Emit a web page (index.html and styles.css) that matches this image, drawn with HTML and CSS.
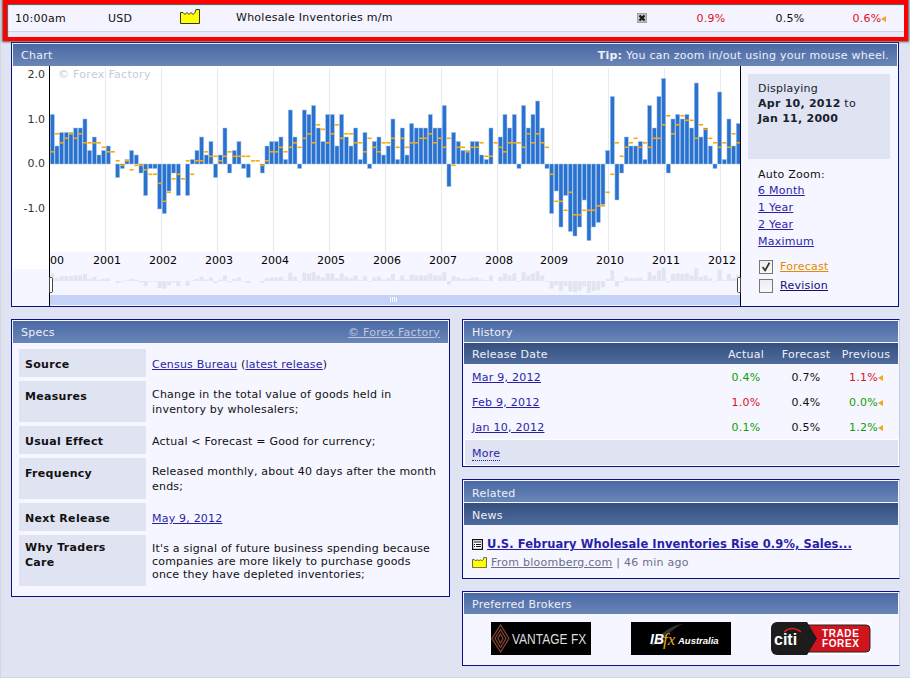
FILE: index.html
```html
<!DOCTYPE html>
<html lang="en">
<head>
<meta charset="utf-8">
<title>Wholesale Inventories m/m</title>
<link rel="stylesheet" href="styles.css">
</head>
<body>
<div class="page">
  <div class="event">
    <span class="event-time">10:00am</span>
    <span class="event-cur">USD</span>
    <span class="event-impact"><svg class="factory" viewBox="0 0 20 15"><path d="M.5 14.500V3.500H3l2 2 2-2 2 2 2-2 2 2 2-2 1-3h3.500v14z"/></svg></span>
    <span class="event-title">Wholesale Inventories m/m</span>
    <span class="event-detail"><svg class="xicon" viewBox="0 0 10 10"><rect width="10" height="10" class="xicon-bg"/><path d="M2.500 2.500l5 5M7.500 2.500l-5 5" class="xicon-x"/></svg></span>
    <span class="event-num event-actual red">0.9%</span>
    <span class="event-num event-fc">0.5%</span>
    <span class="event-num event-prev red">0.6%<i class="tri"></i></span>
  </div>
  <div class="redbox"></div>

  <section class="panel chart-panel">
    <header class="head"><span>Chart</span><span class="tip"><b>Tip:</b> You can zoom in/out using your mouse wheel.</span></header>
    <div class="chart-body">
      <svg id="chart" class="chart" viewBox="13 66 728 240" width="728" height="240"></svg>
      <aside class="side">
        <div class="display-box">Displaying<br><b>Apr 10, 2012</b> to<br><b>Jan 11, 2000</b></div>
        <div class="zoom-title">Auto Zoom:</div>
        <a class="zoom-link" href="#">6 Month</a>
        <a class="zoom-link" href="#">1 Year</a>
        <a class="zoom-link" href="#">2 Year</a>
        <a class="zoom-link" href="#">Maximum</a>
        <div class="legend first"><span class="check"><svg viewBox="0 0 14 14"><path d="M3 7l3 4 5-9" class="tick"/></svg></span><a href="#" class="orange">Forecast</a></div>
        <div class="legend"><span class="check"></span><a href="#" class="navy">Revision</a></div>
      </aside>
    </div>
  </section>

  <div class="cols">
    <section class="panel specs">
      <header class="head"><span>Specs</span><a class="head-link" href="#">© Forex Factory</a></header>
      <div class="spec-rows">
        <div class="spec single"><div class="spec-label">Source</div><div class="spec-value"><a href="#">Census Bureau</a> (<a href="#">latest release</a>)</div></div>
        <div class="spec double"><div class="spec-label">Measures</div><div class="spec-value">Change in the total value of goods held in inventory by wholesalers;</div></div>
        <div class="spec single"><div class="spec-label">Usual Effect</div><div class="spec-value">Actual &lt; Forecast = Good for currency;</div></div>
        <div class="spec double"><div class="spec-label">Frequency</div><div class="spec-value">Released monthly, about 40 days after the month ends;</div></div>
        <div class="spec single"><div class="spec-label">Next Release</div><div class="spec-value"><a href="#">May 9, 2012</a></div></div>
        <div class="spec why"><div class="spec-label">Why Traders Care</div><div class="spec-value">It's a signal of future business spending because companies are more likely to purchase goods once they have depleted inventories;</div></div>
      </div>
    </section>

    <div class="right">
      <section class="panel wide">
        <header class="head short">History</header>
        <div class="hist-grid subhead"><span>Release Date</span><span class="c">Actual</span><span class="c">Forecast</span><span class="c">Previous</span></div>
        <div class="hist-grid row"><a href="#">Mar 9, 2012</a><span class="c green">0.4%</span><span class="c">0.7%</span><span class="c red">1.1%<i class="tri"></i></span></div>
        <div class="hist-grid row"><a href="#">Feb 9, 2012</a><span class="c red">1.0%</span><span class="c">0.4%</span><span class="c green">0.0%<i class="tri"></i></span></div>
        <div class="hist-grid row"><a href="#">Jan 10, 2012</a><span class="c green">0.1%</span><span class="c">0.5%</span><span class="c green">1.2%<i class="tri"></i></span></div>
        <div class="more"><a href="#">More</a></div>
      </section>

      <section class="panel wide">
        <header class="head short related">Related</header>
        <div class="subhead news-head">News</div>
        <div class="news">
          <div class="news-title"><svg class="newsicon" viewBox="0 0 11 11"><rect x=".5" y=".5" width="10" height="10" class="ni-box"/><path d="M2 3h7M2 5.500h1M4 5.500h5M2 7.500h1M4 7.500h5" class="ni-lines"/></svg><a href="#">U.S. February Wholesale Inventories Rise 0.9%, Sales...</a></div>
          <div class="news-meta"><svg class="factory small" viewBox="0 0 20 15"><path d="M.5 14.500V3.500H3l2 2 2-2 2 2 2-2 2 2 2-2 1-3h3.500v14z"/></svg><span><a href="#">From bloomberg.com</a> | 46 min ago</span></div>
        </div>
      </section>

      <section class="panel wide">
        <header class="head short">Preferred Brokers</header>
        <div class="brokers">
          <svg class="logo" viewBox="0 0 100 33">
            <rect width="100" height="33" fill="#000"/>
            <g fill="none" stroke="#7d4033" stroke-width="1.4"><path d="M9.500 3 18 16.500 9.500 30 1 16.500z"/><path d="M9.500 7.500 15 16.500 9.500 25.500 4 16.500z"/><path d="M9.500 12 12 16.500 9.500 21 7 16.500z"/></g>
            <text transform="translate(21 22) scale(.8 1)" class="lg-vantage">VANTAGE FX</text>
          </svg>
          <svg class="logo" viewBox="0 0 100 33">
            <rect width="100" height="33" fill="#000"/>
            <path d="M20 24C28 12 40 3 52 2 44 5 36 12 31 20z" fill="#333"/>
            <text x="19" y="22" class="lg-ib">IB</text>
            <text x="32" y="23" class="lg-fx">fx</text>
            <text x="47" y="22" class="lg-au">Australia</text>
          </svg>
          <svg class="logo" viewBox="0 0 100 33">
            <rect width="100" height="33" fill="#fff"/>
            <path d="M30 3H95a4 4 0 0 1 4 4V26a4 4 0 0 1-4 4H30z" fill="#d0141e" stroke="#222"/>
            <path d="M6 0H36L46 16.500 36 33H6a6 6 0 0 1-6-6V6a6 6 0 0 1 6-6z" fill="#1c1c1c"/>
            <path d="M13 10Q21 3 30 10" fill="none" stroke="#e02027" stroke-width="1.500"/>
            <text x="3" y="23" class="lg-citi">citi</text>
            <text x="51" y="15" class="lg-tf">TRADE</text>
            <text x="51" y="25" class="lg-tf">FOREX</text>
          </svg>
        </div>
      </section>
    </div>
  </div>
</div>
<script src="chart.js"></script>
</body>
</html>
```
FILE: styles.css
```css
* { box-sizing: border-box; }
html, body { margin: 0; padding: 0; }
body {
  background: #e0e3f1;
  font: 11px/15px "DejaVu Sans", Verdana, sans-serif;
  letter-spacing: .25px;
  color: #111;
  overflow: hidden;
}
a { color: #2a1fa8; }
b { font-weight: bold; }
.red { color: #e0101e; }
.green { color: #12a000; }

.page {
  position: relative;
  width: 910px;
  height: 678px;
  box-shadow: inset 1px -1px 0 #d4d6e2;
}

/* event row */
.event {
  display: flex;
  align-items: center;
  height: 38px;
  margin-left: 3px;
  width: 902px;
  padding: 0 0 6px 12px;
  background: linear-gradient(#f3f4ff 0 31px, #d0d4e4 31px 32px, #e8eaf5 32px);
}
.event-time { width: 93px; margin-top: 4px; }
.event-cur { width: 72px; margin-top: 4px; }
.event-impact { width: 56px; display: flex; margin-top: 1px; }
.event-title { width: 401px; margin-top: 2px; }
.event-detail { width: 45px; display: flex; margin-top: 4px; }
.event-num { text-align: center; margin-top: 4px; }
.event-actual { width: 58px; }
.event-fc { width: 100px; }
.event-prev { width: 59px; }
.factory { width: 20px; height: 15px; display: block; }
.factory path { fill: #ff0; stroke: #333; }
.factory.small { width: 15px; height: 11px; }
.xicon { width: 10px; height: 10px; display: block; }
.xicon-bg { fill: #c0c0c0; stroke: #888; }
.xicon-x { stroke: #111; stroke-width: 2; fill: none; }
.tri {
  display: inline-block;
  width: 0;
  height: 0;
  border-style: solid;
  border-width: 3.500px 5px 3.500px 0;
  border-color: transparent #f0a818 transparent transparent;
}
.redbox {
  position: absolute;
  left: 3px;
  top: 0;
  width: 905px;
  height: 41px;
  border: 4px solid #f00;
  box-shadow: 0 0 2px 1px #555, inset 1px 1px 1px #555;
}

/* panels */
.panel {
  background: #f5f6ff;
  border: 1px solid #0c1280;
  padding: 1px;
}
.head {
  display: flex;
  justify-content: space-between;
  align-items: center;
  height: 22px;
  padding: 0 8px;
  color: #eef0f8;
  background: linear-gradient(#4a69a5, #6a86b6);
}
.head.short { height: 21px; padding-top: 2px; }
.head.related { padding-top: 3px; }
.chart-panel {
  margin: 4px 0 12px 11px;
  width: 888px;
  height: 265px;
  padding-bottom: 0;
}
.tip { color: #eef0f8; }
.chart-body { display: flex; height: 240px; }
.chart { display: block; flex: none; letter-spacing: 0; }
.side { width: 156px; padding: 8px 0 0 7px; }
.display-box {
  width: 142px;
  height: 85px;
  padding: 7px 10px;
  background: #e0e3f1;
  color: #16222e;
}
.zoom-title { margin: 8px 0 0 10px; }
.zoom-link { display: block; line-height: 17px; margin-left: 10px; }
.legend {
  display: flex;
  align-items: center;
  height: 19px;
  margin-left: 11px;
  gap: 7px;
}
.legend.first { margin-top: 7px; }
.check {
  display: block;
  width: 14px;
  height: 14px;
  border: 1px solid #777;
  background: linear-gradient(#eeeef2, #f8f8fa);
}
.check svg { display: block; width: 12px; height: 12px; }
.tick { fill: none; stroke: #333; stroke-width: 2; }
.orange { color: #e58a00; }
.navy { color: #12107a; }

/* chart internals, drawn by chart.js */
.c-white { fill: #fff; }
.c-scroll { fill: #c5d2f8; }
.c-grid { fill: #e9eaf0; }
.c-axis { fill: #000; }
.c-bar { fill: #2a72d0; stroke: #9dc0ea; stroke-width: .5; }
.c-fc { fill: #fba900; }
.c-nav { fill: #e1e4f1; }
.c-grip { fill: #fff; }
.c-handle { fill: #fff; stroke: #444; }
.c-ylab { font: 11px "DejaVu Sans", sans-serif; fill: #333; text-anchor: end; }
.c-xlab { font: 11px "DejaVu Sans", sans-serif; fill: #000; text-anchor: middle; }
.c-mark { font: 11px "DejaVu Sans", sans-serif; fill: #c6ccdf; letter-spacing: .3px; }

/* two column lower part */
.cols { display: flex; gap: 12px; margin-left: 11px; align-items: flex-start; }
.specs { width: 439px; height: 278px; }
.head-link { color: #bcc8e0; }
.spec-rows { display: flex; flex-direction: column; gap: 4px; padding: 6px 6px 0; }
.spec { display: flex; gap: 6px; }
.spec-label { width: 127px; flex: none; background: #e0e3f1; padding: 0 16px 0 6px; font-weight: bold; letter-spacing: .3px; }
.spec-value { flex: 1; letter-spacing: .2px; }
.single .spec-label, .single .spec-value { padding-top: 8px; padding-bottom: 5px; }
.double .spec-label { padding-top: 8px; }
.double .spec-value { padding-top: 6px; padding-bottom: 5px; }
.why .spec-label { padding-top: 5px; }
.why .spec-value { padding: 7px 8px 5px 0; line-height: 13px; }

.right { display: flex; flex-direction: column; gap: 12px; width: 438px; }
.wide { border-right-color: #c8cde0; }
.hist-grid {
  display: grid;
  grid-template-columns: 1fr 60px 60px 60px;
  align-items: center;
  padding: 0 2px 0 8px;
}
.c { text-align: center; }
.subhead {
  height: 21px;
  margin-top: 1px;
  padding-top: 2px;
  color: #eef0f8;
  background: linear-gradient(#35507f, #4f6b9b);
}
.row { height: 25px; padding-top: 1px; }
.more {
  height: 27px;
  margin: 0 -1px -1px 0;
  border: 1px solid #fff;
  background: #e0e3f1;
  padding: 6px 0 0 7px;
}
.more a { text-decoration: none; border-bottom: 1px dotted #2a1fa8; }
.news-head { padding: 5px 8px 0; height: 22px; }
.news { height: 52px; padding: 12px 8px 0; }
.news-title { display: flex; align-items: center; gap: 4px; font-weight: bold; font-size: 11.500px; letter-spacing: .08px; }
.newsicon { width: 11px; height: 11px; flex: none; }
.ni-box { fill: #fff; stroke: #111; stroke-width: 1.400; }
.ni-lines { stroke: #111; fill: none; }
.news-meta { display: flex; align-items: center; margin-top: 3px; color: #6b6f8a; gap: 4px; }
.news-meta a { color: #6b6f8a; }
.brokers { display: flex; gap: 40px; height: 50px; padding: 8px 0 0 27px; }
.logo { width: 100px; height: 33px; display: block; flex: none; letter-spacing: 0; }
.lg-vantage { font: 15px "Liberation Sans", sans-serif; fill: #ddd; }
.lg-ib { font: italic bold 14px "Liberation Sans", sans-serif; fill: #fff; }
.lg-fx { font: italic 17px "Liberation Serif", serif; fill: #e8a81e; }
.lg-au { font: italic bold 9.500px "Liberation Sans", sans-serif; fill: #fff; }
.lg-citi { font: bold 16px "Liberation Sans", sans-serif; fill: #fff; }
.lg-tf { font: bold 10px "Liberation Sans", sans-serif; fill: #fff; letter-spacing: .6px; }
```
FILE: chart.js
```js
var bars = [11,4,7,7,7,8,8,10,3,6,2,3,4,0,-3,-1,1,3,2,-2,-7,-1,-1,-10,-11,-6,-2,-7,0,-7,1,3,6,2,5,-3,2,8,-2,3,5,-1,-3,0,0,-2,4,5,5,6,1,12,6,-1,
  12,11,13,8,5,11,11,4,11,6,4,8,1,7,-1,5,6,2,4,10,1,8,2,9,8,8,8,11,8,8,13,-5,7,5,3,3,5,5,2,1,8,0,6,11,8,11,-1,13,8,11,14,8,-1,-11,-6,-14,-7,-15,-16,-14,-8,-17,-14,-13,
  -9,3,15,-8,-2,6,4,4,5,1,13,8,15,19,-2,10,11,10,11,8,18,6,8,4,-1,16,1,10,4,9];
var fc = [3,7,5,6,7,6,7,5,5,5,5,4,3,3,1,0,1,-1,0,0,-1,-2,-2,-4,-8,-6,-3,-2,-3,1,-2,1,1,3,2,2,1,2,3,2,2,2,2,1,1,0,1,3,3,4,3,4,5,4,
  6,7,5,9,8,5,7,9,6,7,7,5,5,3,6,4,3,5,5,6,4,6,4,5,5,6,6,7,5,6,4,6,0,4,4,3,4,4,5,2,2,5,4,3,5,5,5,4,7,5,7,5,4,-2,-8,-8,-10,-6,-11,-11,-10,-10,-10,-9,
  -9,-6,-2,5,2,4,5,6,4,5,4,6,6,9,11,7,9,11,10,10,6,9,8,6,5,4,5,4,7,5];
var svg = document.getElementById('chart');
var NS = 'http://www.w3.org/2000/svg';
function el(name, cls, attrs, txt) {
  var n = document.createElementNS(NS, name);
  n.setAttribute('class', cls);
  for (var k in attrs) n.setAttribute(k, attrs[k]);
  if (txt) n.textContent = txt;
  svg.appendChild(n);
  return n;
}
function rect(cls, x, y, w, h) { return el('rect', cls, {x: x, y: y, width: w, height: h}); }

rect('c-white', 13, 66, 36, 203);
rect('c-white', 50, 66, 690, 186);
rect('c-scroll', 50, 295, 690, 10);

var years = [105, 161, 217, 273, 329, 385, 441, 497, 552, 608, 664, 720];
years.forEach(function (x, i) {
  rect('c-grid', x, 68, 1, 184);
  el('text', 'c-xlab', {x: x + 2, y: 264}, String(2001 + i));
});
el('text', 'c-xlab', {x: 57, y: 264}, '00');
el('text', 'c-mark', {x: 58, y: 78}, '© Forex Factory');

[['2.0', 74], ['1.0', 118.5], ['0.0', 163], ['-1.0', 208]].forEach(function (l) {
  el('text', 'c-ylab', {x: 45, y: l[1] + 4}, l[0]);
});

bars.forEach(function (v, i) {
  var x = 50.3 + i * 14 / 3;
  if (v !== 0) {
    var h = Math.abs(v) * 4.5;
    rect('c-bar', x, v > 0 ? 164 - h : 164, 4, h);
    rect('c-nav', x, v > 0 ? 281 - h * 0.155 : 281, 4, h * 0.155);
  }
});
fc.forEach(function (v, i) {
  rect('c-fc', 50.3 + i * 14 / 3, 164.5 - v * 4.5, 4, 1.6);
});

for (var g = 0; g < 4; g++) rect('c-grip', 390 + g * 2, 297, 1, 5);
rect('c-axis', 49, 66, 1, 240);
rect('c-axis', 740, 66, 1, 240);
el('path', 'c-handle', {d: 'M49.500 277.500h2a1 1 0 0 1 1 1v13a1 1 0 0 1-1 1h-2z'});
el('path', 'c-handle', {d: 'M740.500 277.500h-2a1 1 0 0 0-1 1v13a1 1 0 0 0 1 1h2z'});
```
